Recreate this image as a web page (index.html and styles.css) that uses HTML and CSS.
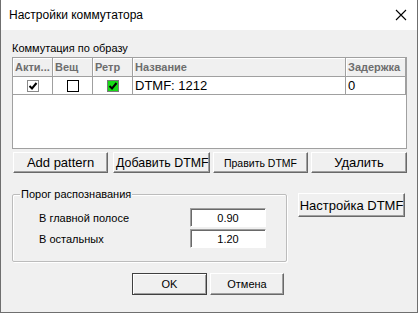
FILE: index.html
```html
<!DOCTYPE html>
<html lang="ru">
<head>
    <meta charset="UTF-8">
    <title>Настройки коммутатора</title>
    <link rel="stylesheet" href="styles.css">
</head>
<body>
    <div class="window">
        <div class="titlebar">
            <span class="title">Настройки коммутатора</span>
            <svg class="close" width="12" height="12" viewBox="0 0 12 12">
                <path d="M1 1 L11 11 M11 1 L1 11" stroke="#000" stroke-width="1.1" fill="none"/>
            </svg>
        </div>

        <div class="content">
            <div class="section-title">Коммутация по образу</div>

            <div class="listview">
                <div class="lv-row lv-head">
                    <div class="cell">Акти...</div>
                    <div class="cell">Вещ</div>
                    <div class="cell">Ретр</div>
                    <div class="cell">Название</div>
                    <div class="cell">Задержка</div>
                </div>
                <div class="lv-row lv-item">
                    <div class="cell center">
                        <span class="check checked">
                            <svg width="10" height="10" viewBox="0 0 10 10"><path d="M1.5 5 L4 7.5 L8.5 2" stroke="#000" stroke-width="2" fill="none"/></svg>
                        </span>
                    </div>
                    <div class="cell center"><span class="check empty"></span></div>
                    <div class="cell center">
                        <span class="check green">
                            <svg width="10" height="10" viewBox="0 0 10 10"><path d="M1.5 5 L4 7.5 L8.5 2" stroke="#000" stroke-width="2" fill="none"/></svg>
                        </span>
                    </div>
                    <div class="cell">DTMF: 1212</div>
                    <div class="cell">0</div>
                </div>
            </div>

            <div class="button-row">
                <button class="btn btn-add">Add pattern</button>
                <button class="btn btn-dtmf">Добавить DTMF</button>
                <button class="btn btn-edit">Править DTMF</button>
                <button class="btn btn-del">Удалить</button>
            </div>

            <div class="middle">
                <div class="groupbox">
                    <span class="groupbox-title">Порог распознавания</span>
                    <div class="field">
                        <label>В главной полосе</label>
                        <input type="text" value="0.90">
                    </div>
                    <div class="field">
                        <label>В остальных</label>
                        <input type="text" value="1.20">
                    </div>
                </div>
                <button class="btn btn-setup">Настройка DTMF</button>
            </div>

            <div class="footer">
                <button class="btn btn-ok">OK</button>
                <button class="btn btn-cancel">Отмена</button>
            </div>
        </div>
    </div>
</body>
</html>
```

FILE: styles.css
```css
body {
    margin: 0;
    font-family: "Liberation Sans", Arial, sans-serif;
    background: #f0f0f0;
}
.window {
    width: 416px;
    height: 312px;
    border: 1px solid #6f6f6f;
    border-top: none;
    background: #f0f0f0;
}
.titlebar {
    height: 30px;
    background: #fff;
    display: flex;
    align-items: center;
    justify-content: space-between;
    padding: 0 8px 0 8px;
}
.title {
    font-size: 12px;
    color: #000;
}
.close {
    margin-right: 2px;
}
.content {
    padding-left: 11px;
}
.section-title {
    margin-top: 11px;
    height: 14px;
    line-height: 14px;
    font-size: 11px;
    color: #000;
}
.listview {
    margin-top: 2px;
    width: 393px;
    height: 90px;
    border: 1px solid #a0a0a0;
    background: #fff;
}
.lv-row {
    display: grid;
    grid-template-columns: 40px 40px 40px 213px 60px;
}
.lv-head {
    height: 18px;
    background: #f0f0f0;
    border-bottom: 1px solid #a0a0a0;
}
.lv-head .cell {
    font-size: 11px;
    font-weight: bold;
    color: #6d6d6d;
    line-height: 18px;
    padding-left: 2px;
    border-right: 1px solid #a0a0a0;
    box-shadow: inset 1px 1px 0 #fff;
}
.lv-item {
    height: 17px;
    border-bottom: 1px solid #a0a0a0;
}
.lv-item .cell {
    font-size: 13px;
    line-height: 17px;
    padding-left: 2px;
    border-right: 1px solid #a0a0a0;
    color: #000;
}
.cell {
    box-sizing: border-box;
    overflow: hidden;
    white-space: nowrap;
}
.lv-item .cell.center {
    display: flex;
    align-items: center;
    justify-content: center;
    padding-left: 0;
}
.check {
    box-sizing: border-box;
    width: 12px;
    height: 12px;
    display: flex;
    align-items: center;
    justify-content: center;
    background: #fff;
}
.check.checked {
    border: 1px solid #8a8a8a;
}
.check.empty {
    border: 1px solid #000;
}
.check.green {
    border: 1px solid #7a7a7a;
    background: #17db17;
}
.button-row {
    margin-top: 3px;
    margin-left: 1px;
    display: flex;
}
.btn {
    box-sizing: border-box;
    background: #f0f0f0;
    border: 1px solid;
    border-color: #fff #696969 #696969 #fff;
    box-shadow: inset -1px -1px 0 #a0a0a0;
    font-family: "Liberation Sans", Arial, sans-serif;
    color: #000;
    padding: 0;
    white-space: nowrap;
    overflow: hidden;
}
.button-row .btn {
    height: 21px;
    font-size: 13px;
}
.btn-add {
    width: 95px;
}
.button-row .btn-dtmf {
    width: 97px;
    margin-left: 5px;
    text-align: left;
    padding-left: 2px;
    font-size: 12.4px;
}
.button-row .btn-edit {
    width: 95px;
    margin-left: 3px;
    font-size: 10.5px;
}
.btn-del {
    width: 96px;
    margin-left: 3px;
}
.middle {
    margin-top: 20px;
    display: flex;
    align-items: flex-start;
}
.groupbox {
    position: relative;
    margin-top: 1px;
    width: 273px;
    height: 53px;
    border: 1px solid #bcbcbc;
    border-radius: 2px;
    box-shadow: inset 1px 1px 0 #fff, 1px 1px 0 #fff;
    padding-top: 13px;
    display: flex;
    flex-direction: column;
    gap: 2px;
}
.groupbox-title {
    position: absolute;
    top: -7px;
    left: 7px;
    padding: 0 1px;
    background: #f0f0f0;
    font-size: 11px;
    line-height: 13px;
}
.field {
    display: flex;
    align-items: center;
    justify-content: space-between;
    padding: 0 20px 0 26px;
    height: 19px;
}
.field label {
    font-size: 11px;
    color: #000;
}
.field input {
    box-sizing: border-box;
    width: 76px;
    height: 19px;
    border: 1px solid;
    border-color: #a0a0a0 #fff #fff #a0a0a0;
    box-shadow: inset 1px 1px 0 #696969;
    background: #fff;
    text-align: center;
    font-family: "Liberation Sans", Arial, sans-serif;
    font-size: 11px;
    padding: 0;
    color: #000;
}
.btn-setup {
    margin-left: 11px;
    width: 107px;
    height: 24px;
    font-size: 13px;
}
.footer {
    margin-top: 11px;
    margin-left: 120px;
    display: flex;
    gap: 3px;
}
.footer .btn {
    height: 22px;
    font-size: 11px;
}
.btn-ok {
    width: 75px;
    border-color: #404040;
    box-shadow: inset 1px 1px 0 #fff, inset -1px -1px 0 #a0a0a0;
}
.btn-cancel {
    width: 74px;
}
```
